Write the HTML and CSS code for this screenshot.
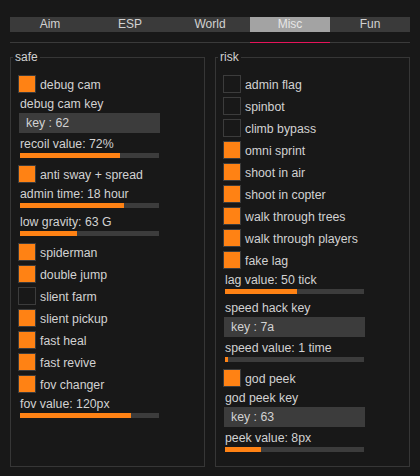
FILE: index.html
```html
<!DOCTYPE html>
<html lang="en">
<head>
  <meta charset="UTF-8">
  <title>menu</title>
  <link rel="stylesheet" href="styles.css">
</head>
<body>

  <div class="menu">

    <div class="tabs">
      <div class="tab">Aim</div>
      <div class="tab">ESP</div>
      <div class="tab">World</div>
      <div class="tab active">Misc</div>
      <div class="tab">Fun</div>
    </div>
    <div class="tab-line">
      <span></span><span></span><span></span><span class="on"></span><span></span>
    </div>

    <div class="panels">

      <!-- safe -->
      <fieldset class="group">
        <legend>safe</legend>

        <div class="check"><span class="box on"></span>debug cam</div>
        <div class="keybind">
          <div class="label">debug cam key</div>
          <div class="key">key : 62</div>
        </div>
        <div class="slider">
          <div class="label">recoil value: 72%</div>
          <div class="bar"><div class="fill" style="width: 72%"></div></div>
        </div>

        <div class="check"><span class="box on"></span>anti sway + spread</div>
        <div class="slider">
          <div class="label">admin time: 18 hour</div>
          <div class="bar"><div class="fill" style="width: 75%"></div></div>
        </div>
        <div class="slider">
          <div class="label">low gravity: 63 G</div>
          <div class="bar"><div class="fill" style="width: 41%"></div></div>
        </div>

        <div class="check"><span class="box on"></span>spiderman</div>
        <div class="check"><span class="box on"></span>double jump</div>
        <div class="check"><span class="box"></span>slient farm</div>
        <div class="check"><span class="box on"></span>slient pickup</div>
        <div class="check"><span class="box on"></span>fast heal</div>
        <div class="check"><span class="box on"></span>fast revive</div>
        <div class="check"><span class="box on"></span>fov changer</div>
        <div class="slider">
          <div class="label">fov value: 120px</div>
          <div class="bar"><div class="fill" style="width: 80%"></div></div>
        </div>
      </fieldset>

      <!-- risk -->
      <fieldset class="group">
        <legend>risk</legend>

        <div class="check"><span class="box"></span>admin flag</div>
        <div class="check"><span class="box"></span>spinbot</div>
        <div class="check"><span class="box"></span>climb bypass</div>
        <div class="check"><span class="box on"></span>omni sprint</div>
        <div class="check"><span class="box on"></span>shoot in air</div>
        <div class="check"><span class="box on"></span>shoot in copter</div>
        <div class="check"><span class="box on"></span>walk through trees</div>
        <div class="check"><span class="box on"></span>walk through players</div>
        <div class="check"><span class="box on"></span>fake lag</div>
        <div class="slider">
          <div class="label">lag value: 50 tick</div>
          <div class="bar"><div class="fill" style="width: 52%"></div></div>
        </div>
        <div class="keybind">
          <div class="label">speed hack key</div>
          <div class="key">key : 7a</div>
        </div>
        <div class="slider">
          <div class="label">speed value: 1 time</div>
          <div class="bar"><div class="fill" style="width: 2%"></div></div>
        </div>

        <div class="check"><span class="box on"></span>god peek</div>
        <div class="keybind">
          <div class="label">god peek key</div>
          <div class="key">key : 63</div>
        </div>
        <div class="slider">
          <div class="label">peek value: 8px</div>
          <div class="bar"><div class="fill" style="width: 26%"></div></div>
        </div>
      </fieldset>

    </div>
  </div>

</body>
</html>
```

FILE: styles.css
```css
html, body {
  margin: 0;
  height: 100%;
}
body {
  background-color: #181818;
  color: #d2d2d2;
  font-family: "Liberation Sans", Arial, sans-serif;
  font-size: 12px;
}
.menu {
  box-sizing: border-box;
  height: 100%;
  padding: 17px 10px 9px;
  display: flex;
  flex-direction: column;
}

/* tabs */
.tabs {
  display: grid;
  grid-template-columns: repeat(5, 1fr);
  height: 15px;
  background-color: #3a3a3a;
}
.tab {
  text-align: center;
  line-height: 15px;
}
.tab.active {
  background-color: #a3a3a3;
  color: #e6e6e6;
}
.tab-line {
  display: grid;
  grid-template-columns: repeat(5, 1fr);
  height: 1px;
  margin-top: 10px;
  background-color: #3a3a3a;
}
.tab-line .on {
  background-color: #e5145a;
}

/* group boxes */
.panels {
  flex: 1;
  display: grid;
  grid-template-columns: 1fr 1fr;
  gap: 10px;
  margin-top: 7px;
}
.group {
  margin: 0;
  min-width: 0;
  border: 1px solid #363636;
  padding: 11px 7px 0;
  display: flex;
  flex-direction: column;
  gap: 4px;
  font-size: 12.3px;
}
.group legend {
  margin-left: -5px;
  padding: 0 2px;
  line-height: 14px;
  font-size: 12px;
}

/* checkbox rows */
.check {
  display: flex;
  align-items: flex-start;
  gap: 4px;
  height: 18px;
  line-height: 20px;
}
.box {
  box-sizing: border-box;
  flex: none;
  width: 18px;
  height: 18px;
  border: 1px solid #3c3c3c;
}
.box.on {
  background-color: #ff8214;
}

/* labels, keys, sliders */
.label {
  line-height: 14px;
  margin-left: 2px;
}
.keybind, .slider {
  display: flex;
  flex-direction: column;
  gap: 2px;
}
.slider {
  margin-bottom: 3px;
}
.key {
  box-sizing: border-box;
  width: 141px;
  height: 20px;
  line-height: 20px;
  margin-left: 1px;
  padding-left: 7px;
  background-color: #3c3c3c;
}
.bar {
  width: 139px;
  height: 5px;
  margin-left: 2px;
  background-color: #3c3c3c;
}
.fill {
  height: 100%;
  background-color: #ff8214;
}
```
